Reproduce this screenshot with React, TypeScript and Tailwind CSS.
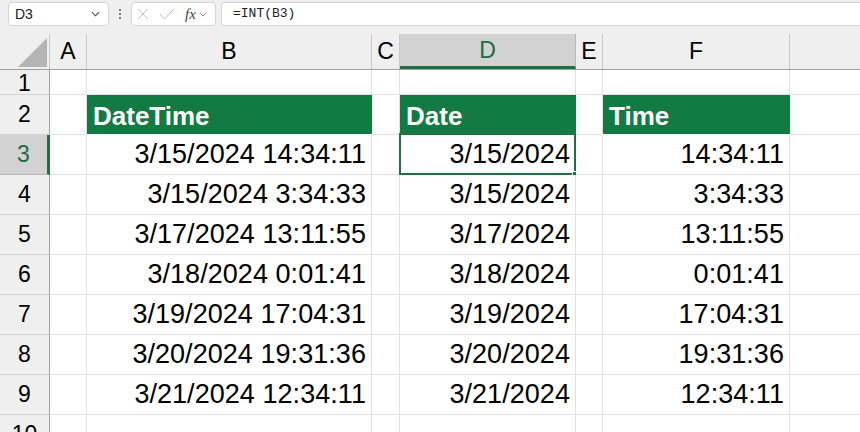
import React from 'react';

const dateTimes = [
  '3/15/2024 14:34:11',
  '3/15/2024 3:34:33',
  '3/17/2024 13:11:55',
  '3/18/2024 0:01:41',
  '3/19/2024 17:04:31',
  '3/20/2024 19:31:36',
  '3/21/2024 12:34:11',
];

const columns = [
  { key: 'A', width: 'w-[37px]', label: 'A' },
  { key: 'B', width: 'w-[285px]', label: 'B' },
  { key: 'C', width: 'w-[28px]', label: 'C' },
  { key: 'D', width: 'w-[176px]', label: 'D' },
  { key: 'E', width: 'w-[27px]', label: 'E' },
  { key: 'F', width: 'w-[187px]', label: 'F' },
  { key: 'G', width: 'w-[80px]', label: '' },
];

function cellText(col: string, row: number): string {
  if (row < 3 || row > 9) return '';
  const dt = dateTimes[row - 3];
  const [d, t] = dt.split(' ');
  if (col === 'B') return dt;
  if (col === 'D') return d;
  if (col === 'F') return t;
  return '';
}

const headers: Record<string, string> = { B: 'DateTime', D: 'Date', F: 'Time' };

function Chevron({ className }: { className?: string }) {
  return (
    <svg viewBox="0 0 10 6" className={className} fill="none" stroke="currentColor" strokeWidth="1.2">
      <path d="M1 1l4 4 4-4" />
    </svg>
  );
}

function Toolbar() {
  return (
    <div className="h-[34px] flex items-start pt-[2px] pl-[8px]">
      <div className="w-[101px] h-[24px] bg-white border border-[#d6d6d6] rounded-[4px] flex items-center justify-between pl-[6px] pr-[8px]">
        <span className="text-[14px] text-[#222]">D3</span>
        <Chevron className="w-[9px] h-[6px] text-[#444]" />
      </div>
      <div className="w-[22px] h-[24px] flex flex-col items-center justify-center gap-[2px]">
        <span className="w-[2px] h-[2px] bg-[#555] rounded-full" />
        <span className="w-[2px] h-[2px] bg-[#555] rounded-full" />
        <span className="w-[2px] h-[2px] bg-[#555] rounded-full" />
      </div>
      <div className="w-[85px] h-[24px] bg-white border border-[#d6d6d6] rounded-[4px] flex items-center pl-[5px]">
        <svg viewBox="0 0 12 12" className="w-[12px] h-[12px] text-[#c2c2c2]" fill="none" stroke="currentColor" strokeWidth="1">
          <path d="M1 1l10 10M11 1L1 11" />
        </svg>
        <svg viewBox="0 0 16 12" className="w-[16px] h-[12px] ml-[10px] text-[#c2c2c2]" fill="none" stroke="currentColor" strokeWidth="1">
          <path d="M1 6l4.5 5L15 1" />
        </svg>
        <span className="ml-[10px] text-[15px] italic text-[#444] font-['Liberation_Serif',serif] leading-none">fx</span>
        <Chevron className="ml-[3px] w-[8px] h-[5px] text-[#888]" />
      </div>
      <div className="flex-1 ml-[5px] h-[24px] bg-white border border-[#d6d6d6] border-r-0 rounded-l-[4px] flex items-center pl-[11px]">
        <span className="text-[13px] text-[#222] font-['Liberation_Mono',monospace]">=INT(B3)</span>
      </div>
    </div>
  );
}

function ColumnHeader() {
  return (
    <div className="flex h-[36px] border-b border-[#a0a0a0]">
      <div className="w-[50px] shrink-0 border-r border-[#c8c8c8] relative">
        <svg viewBox="0 0 29 29" className="absolute left-[18px] top-[4px] w-[29px] h-[29px]">
          <path d="M29 0L29 29L0 29Z" fill="#b4b4b4" />
        </svg>
      </div>
      {columns.map((c) => {
        const selected = c.key === 'D';
        return (
          <div
            key={c.key}
            className={`${c.width} shrink-0 flex items-center justify-center text-[23px] leading-none ${
              selected
                ? 'bg-[#d2d2d2] text-[#1e6b41] border-b-[3px] border-[#1e7145] border-r border-r-[#b8b8b8]'
                : 'text-black border-r border-[#c8c8c8]'
            }`}
          >
            {c.label}
          </div>
        );
      })}
    </div>
  );
}

function Row({ n }: { n: number }) {
  const height = n === 1 ? 'h-[25px]' : 'h-[40px]';
  const rowSelected = n === 3;
  return (
    <div className={`flex ${height}`}>
      <div
        className={`w-[50px] shrink-0 flex justify-center text-[23px] leading-none border-b ${
          n === 1 ? 'items-start pt-[2px]' : 'items-center'
        } ${
          rowSelected
            ? 'bg-[#d2d2d2] text-[#1e6b41] border-r-[3px] border-r-[#1e7145] border-b-[#b8b8b8]'
            : 'bg-[#efefef] text-black border-r border-r-[#a0a0a0] border-b-[#d4d4d4]'
        }`}
      >
        {n}
      </div>
      {columns.map((c) => {
        const isHeader = n === 2 && headers[c.key];
        const text = cellText(c.key, n);
        const selected = n === 3 && c.key === 'D';
        if (isHeader) {
          return (
            <div
              key={c.key}
              className={`${c.width} shrink-0 bg-[#127a43] border-b border-white flex items-end pl-[6px] pb-[5px] text-white font-bold text-[26px] leading-none`}
            >
              {headers[c.key]}
            </div>
          );
        }
        return (
          <div
            key={c.key}
            className={`${c.width} shrink-0 bg-white border-r border-b border-[#e2e2e2] flex items-end justify-end pr-[5px] pb-[6px] text-[27px] leading-none tracking-[0.05px] text-black relative`}
          >
            {text}
            {selected && (
              <div className="absolute -top-[2px] -left-[1px] -right-[1px] -bottom-[1px] border-2 border-[#1e7145]">
                <div className="absolute -right-[4px] -bottom-[4px] w-[6px] h-[6px] bg-[#1e7145] border border-white" />
              </div>
            )}
          </div>
        );
      })}
    </div>
  );
}

export default function App() {
  return (
    <div className="w-[860px] h-[432px] overflow-hidden bg-[#efefef] font-['Liberation_Sans',sans-serif]">
      <Toolbar />
      <ColumnHeader />
      {[1, 2, 3, 4, 5, 6, 7, 8, 9, 10].map((n) => (
        <Row key={n} n={n} />
      ))}
    </div>
  );
}
